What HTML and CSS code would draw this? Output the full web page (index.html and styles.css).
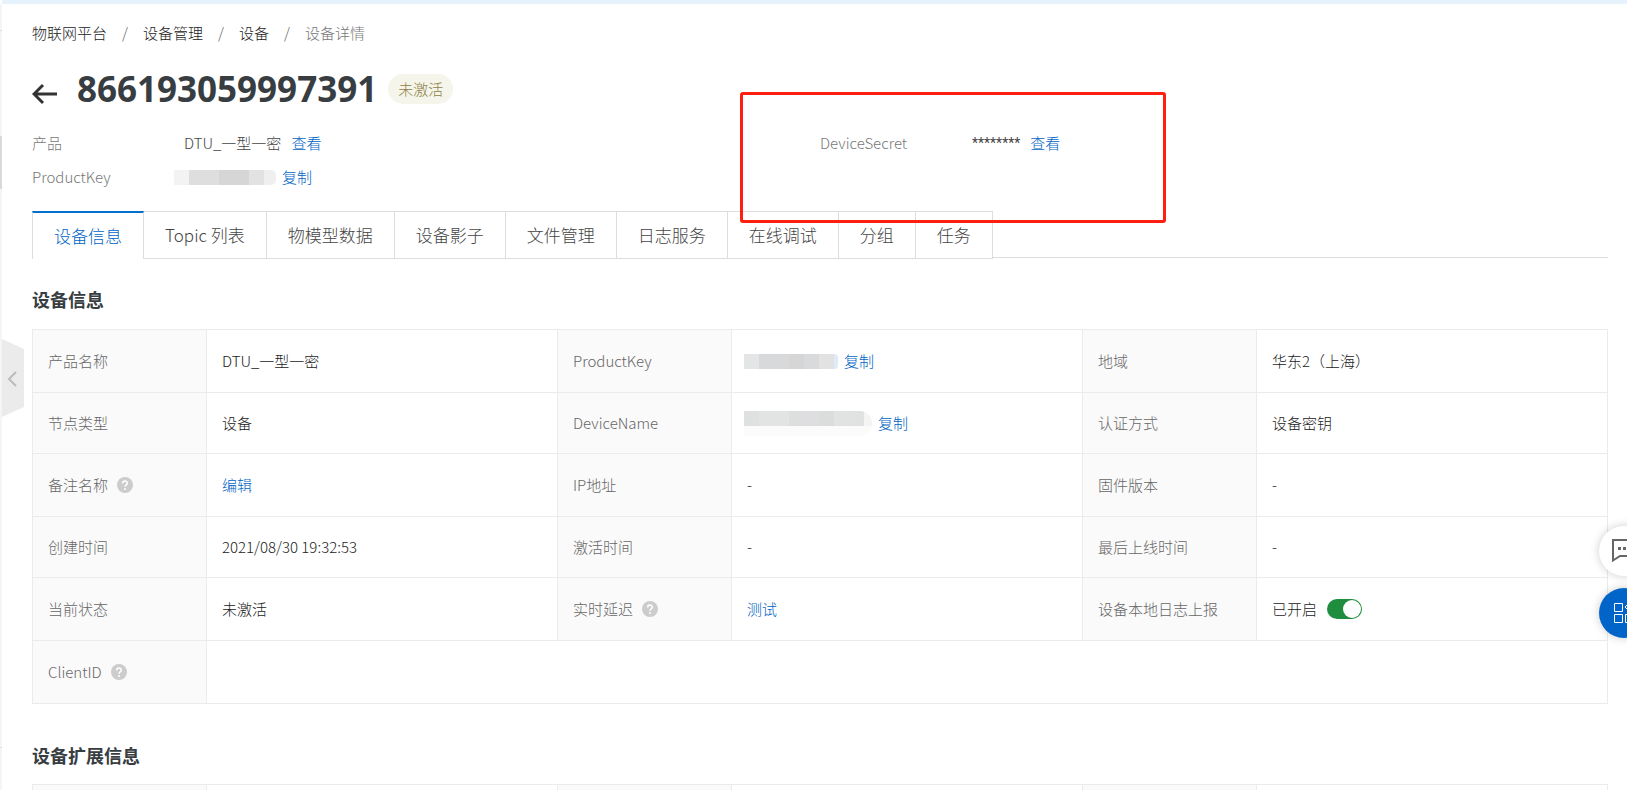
FILE: index.html
```html
<!DOCTYPE html>
<html lang="zh-CN">
<head>
<meta charset="utf-8">
<title>设备详情</title>
<link rel="stylesheet" href="styles.css">
</head>
<body>
<div class="topbar"></div>
<div class="shell">
  <aside class="rail"><span class="rail-mark"></span><span class="rail-thumb"></span><span class="rail-mark rail-mark-low"></span></aside>
  <main class="page">
    <nav class="breadcrumb">
      <a href="#">物联网平台</a><span class="sep">/</span><a href="#">设备管理</a><span class="sep">/</span><a href="#">设备</a><span class="sep">/</span><span class="current">设备详情</span>
    </nav>
    <header class="title-row">
      <button class="back" aria-label="返回"><svg width="26" height="22" viewBox="0 0 26 22" fill="none" stroke="#333" stroke-width="3"><path d="M2 11H25M11 2L2 11L11 20"/></svg></button>
      <h1>866193059997391</h1>
      <span class="badge">未激活</span>
    </header>
    <dl class="summary">
      <div class="item"><dt>产品</dt><dd>DTU_一型一密<a class="link" href="#">查看</a></dd></div>
      <div class="item"><dt>DeviceSecret</dt><dd><span class="secret">********</span><a class="link" href="#">查看</a></dd></div>
      <div class="item"><dt>ProductKey</dt><dd><span class="mask mask-top"></span><button class="link copy">复制</button></dd></div>
    </dl>
    <div class="tabs" role="tablist">
      <button class="tab active" role="tab" aria-selected="true">设备信息</button>
      <button class="tab" role="tab">Topic 列表</button>
      <button class="tab" role="tab">物模型数据</button>
      <button class="tab" role="tab">设备影子</button>
      <button class="tab" role="tab">文件管理</button>
      <button class="tab" role="tab">日志服务</button>
      <button class="tab" role="tab">在线调试</button>
      <button class="tab" role="tab">分组</button>
      <button class="tab" role="tab">任务</button>
    </div>
    <section>
      <h2>设备信息</h2>
      <table class="info">
        <colgroup><col class="label-col"><col><col class="label-col"><col><col class="label-col"><col></colgroup>
        <tbody>
        <tr><th>产品名称</th><td>DTU_一型一密</td><th>ProductKey</th><td><div class="masked"><span class="mask mask-key"></span><button class="link copy">复制</button></div></td><th>地域</th><td>华东2（上海）</td></tr>
        <tr><th>节点类型</th><td>设备</td><th>DeviceName</th><td><div class="masked"><span class="mask mask-name"></span><button class="link copy">复制</button></div></td><th>认证方式</th><td>设备密钥</td></tr>
        <tr><th><span class="with-help">备注名称<svg class="help" viewBox="0 0 16 16"><circle cx="8" cy="8" r="8" fill="#ccc"/><path d="M5.700 6.500C5.700 3.300 10.300 3.300 10.300 6.200C10.300 7.800 8 7.900 8 9.700" fill="none" stroke="#fff" stroke-width="1.500"/><circle cx="8" cy="11.900" r="1" fill="#fff"/></svg></span></th><td><button class="link">编辑</button></td><th>IP地址</th><td>-</td><th>固件版本</th><td>-</td></tr>
        <tr><th>创建时间</th><td>2021/08/30 19:32:53</td><th>激活时间</th><td>-</td><th>最后上线时间</th><td>-</td></tr>
        <tr><th>当前状态</th><td>未激活</td><th><span class="with-help">实时延迟<svg class="help" viewBox="0 0 16 16"><circle cx="8" cy="8" r="8" fill="#ccc"/><path d="M5.700 6.500C5.700 3.300 10.300 3.300 10.300 6.200C10.300 7.800 8 7.900 8 9.700" fill="none" stroke="#fff" stroke-width="1.500"/><circle cx="8" cy="11.900" r="1" fill="#fff"/></svg></span></th><td><button class="link">测试</button></td><th><label for="log-switch">设备本地日志上报</label></th><td><div class="switch-cell">已开启<input id="log-switch" class="switch" type="checkbox" role="switch" checked></div></td></tr>
        <tr><th><span class="with-help">ClientID<svg class="help" viewBox="0 0 16 16"><circle cx="8" cy="8" r="8" fill="#ccc"/><path d="M5.700 6.500C5.700 3.300 10.300 3.300 10.300 6.200C10.300 7.800 8 7.900 8 9.700" fill="none" stroke="#fff" stroke-width="1.500"/><circle cx="8" cy="11.900" r="1" fill="#fff"/></svg></span></th><td colspan="5"></td></tr>
        </tbody>
      </table>
    </section>
    <section class="extended">
      <h2>设备扩展信息</h2>
      <table class="info">
        <colgroup><col class="label-col"><col><col class="label-col"><col><col class="label-col"><col></colgroup>
        <tbody><tr><th></th><td></td><th></th><td></td><th></th><td></td></tr></tbody>
      </table>
    </section>
  </main>
</div>
<button class="collapse" aria-label="收起"><svg width="22" height="78" viewBox="0 0 22 78"><path d="M0 0L22 10V68L0 78Z" fill="#ebebeb"/><path d="M14 33L7 40L14 47" fill="none" stroke="#bbb" stroke-width="2"/></svg></button>
<div class="highlight"></div>
<div class="floating">
  <button class="fab" aria-label="咨询"><svg width="26" height="26" viewBox="0 0 26 26"><path d="M1 2H25V18H8L1 22.500Z" fill="none" stroke="#666" stroke-width="2"/><path d="M6 9h3v3h-3zM11 9h3v3h-3zM16 9h3v3h-3z" fill="#666"/></svg></button>
  <button class="fab fab-primary" aria-label="应用"><svg width="22" height="22" viewBox="0 0 22 22" fill="none" stroke="#fff" stroke-width="1"><path d="M1.500 1.500h8v8h-8zM1.500 12.500h8v8h-8zM12.500 12.500h8v8h-8zM16.500 .5L21 5L16.500 9.500L12 5Z"/></svg></button>
</div>
</body>
</html>
```
FILE: styles.css
```css
* { box-sizing: border-box; }
body {
  margin: 0;
  height: 100vh;
  overflow: hidden;
  display: flex;
  flex-direction: column;
  position: relative;
  background: #fff;
  color: #222;
  font: 300 15px/20px "Noto Sans CJK SC", sans-serif;
}
button { border: 0; padding: 0; background: none; font: inherit; color: inherit; cursor: pointer; }
a { text-decoration: none; color: inherit; }
h1, h2, dl, dd { margin: 0; }

.topbar { flex: none; height: 4px; margin-left: 2px; background: #e6f2fc; }
.shell { flex: 1; display: grid; grid-template-columns: 2px minmax(0, 1fr); min-height: 0; }
.rail { display: flex; flex-direction: column; background: #f5f5f5; }
.rail-mark { height: 1px; margin-top: 26px; background: #ddd; }
.rail-thumb { height: 53px; margin-top: 105px; background: #d9d9d9; }
.rail-mark-low { margin-top: 558px; }
.page { padding: 19px 19px 0 30px; overflow: hidden; }

.breadcrumb { display: flex; }
.breadcrumb .sep { width: 36px; text-align: center; color: #666; }
.breadcrumb .current { color: #777; }

.title-row { display: flex; align-items: center; height: 40px; margin-top: 26px; }
.back { display: flex; width: 45px; padding-top: 10px; }
h1 { font: 700 35px/40px "Open Sans", "Noto Sans", sans-serif; color: #373d41; }
.badge { margin-left: 11px; padding: 0 10px; border-radius: 15px; line-height: 30px; background: #f5f5eb; color: #8f8248; }

.summary { display: grid; grid-template-columns: 1fr 1fr; margin-top: 17px; }
.item { display: grid; grid-template-columns: 152px 1fr; height: 34px; align-items: center; }
.item dt { color: #777; }
.item dd { display: flex; align-items: center; color: #444; }
.secret { font: 400 14px/20px Roboto, sans-serif; }
.link { color: #0064c4; }
.item .link { margin-left: 10px; }
.link.copy, .item .link.copy { margin-left: 6px; }

.mask { flex: none; height: 15px; }
.mask-top {
  width: 102px;
  margin-left: -10px;
  border-radius: 0 5px 5px 0;
  background: linear-gradient(90deg, #f3f3f3 15px, #dedede 15px 45px, #d6d6d6 45px 75px, #e2e2e2 75px 90px, #efefef 90px);
}
.mask-key {
  width: 94px;
  background: linear-gradient(90deg, #e4e5e5 15px, #d8d9da 15px 45px, #d5d6d5 45px 60px, #d9dadb 60px 75px, #e1e2e1 75px 90px, #deebf7 90px);
  border-radius: 0 4px 4px 0;
}
.mask-name {
  width: 128px;
  height: 25px;
  border-radius: 0 12px 12px 0;
  background:
    linear-gradient(#fafbfa, #fafbfa) 0 15px / 100% 10px no-repeat,
    linear-gradient(90deg, #dfe1e0 15px, #e2e4e3 15px 45px, #dddfdf 45px 60px, #dedee1 60px 75px, #dbdcdc 75px 90px, #e1e3e2 90px 105px, #dfe2e0 105px 120px, #f3f4f3 120px);
}

.tabs { display: flex; height: 47px; margin-top: 17px; border-bottom: 1px solid #ddd; }
.tab {
  height: 48px;
  padding: 0 21px;
  border: solid #ddd;
  border-width: 1px 1px 1px 0;
  background: #fff;
  font-size: 17px;
  color: #444;
}
.tab.active { border-left-width: 1px; border-top: 2px solid #0070cc; border-bottom: 0; color: #0064c4; }

h2 { margin: 29px 0 18px; font-size: 18px; line-height: 24px; font-weight: 700; color: #373d41; }
.extended h2 { margin: 39px 0 17px; }
.info { width: 100%; table-layout: fixed; border-collapse: collapse; }
.label-col { width: 174px; }
.info tr { height: 63px; }
.info tr:nth-child(2), .info tr:nth-child(4) { height: 61px; }
.info th, .info td { padding: 0 15px; border: 1px solid #ebebeb; text-align: left; font-weight: inherit; }
.info th { background: #fafafa; color: #666; }
.info td { color: #222; }
.info .link { color: #0064c4; }
.with-help { display: flex; align-items: center; gap: 9px; }
.help { width: 16px; height: 16px; }
.masked { display: flex; align-items: center; margin-left: -3px; }
.switch-cell { display: flex; align-items: center; gap: 10px; }
.switch { appearance: none; display: flex; justify-content: flex-end; width: 35px; height: 20px; margin: 0; padding: 1px; border-radius: 10px; background: #1e8e3e; }
.switch::before { content: ""; width: 18px; height: 18px; border-radius: 50%; background: #fff; }
.switch:not(:checked) { justify-content: flex-start; background: #bbb; }

.collapse { position: absolute; left: 2px; top: 339px; display: flex; }
.highlight { position: absolute; left: 740px; top: 92px; width: 426px; height: 131px; border: 3px solid #ff1e10; border-radius: 3px; pointer-events: none; }
.floating { position: fixed; right: -22px; top: 526px; display: grid; gap: 12px; }
.fab { display: flex; align-items: center; width: 50px; height: 50px; padding-left: 13px; border-radius: 50%; background: #fff; box-shadow: 0 0 10px rgba(0, 0, 0, 0.2); }
.fab-primary { background: #0064c8; padding-left: 14px; }
```
